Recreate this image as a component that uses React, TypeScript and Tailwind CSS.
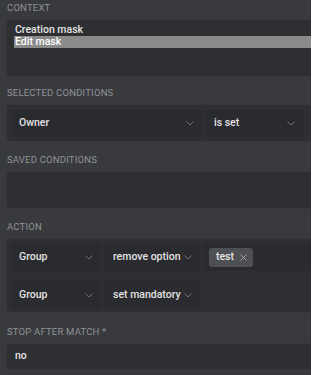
import React from "react";

const Chevron = () => (
  <svg width="8" height="5" viewBox="0 0 8 5" fill="none" className="shrink-0">
    <path d="M0.5 0.5 L4 4 L7.5 0.5" stroke="#6f7176" strokeWidth="1" />
  </svg>
);

const Select = ({ label, w }: { label: string; w: string }) => (
  <div className={`${w} h-[28px] shrink-0 rounded-[3px] bg-[#2a2b2f] flex items-center justify-between pl-[8px] pr-[8px]`}>
    <span className="text-[10.5px] font-medium text-[#e2e2e2] leading-none">{label}</span>
    <Chevron />
  </div>
);

const Label = ({ children, className = "" }: { children: React.ReactNode; className?: string }) => (
  <div className={`h-[14px] leading-[14px] pt-[1px] text-[9.5px] font-normal uppercase tracking-[0.2px] text-[#909297] pl-[1px] mb-[5px] ${className}`}>
    {children}
  </div>
);

const Box = ({ children, className = "" }: { children?: React.ReactNode; className?: string }) => (
  <div className={`w-full rounded-[3px] border border-[#36373b] bg-[#2e2f33] ${className}`}>{children}</div>
);

export default function App() {
  return (
    <div
      className="w-[311px] h-[375px] overflow-hidden bg-[#393a3e]"
      style={{ fontFamily: "Roboto, 'Open Sans', sans-serif" }}
    >
      <div className="w-[340px] pl-[6px]">
        <Label>Context</Label>
        <Box className="h-[58px] pt-[4px] pl-[7px]">
          <div className="h-[12px] leading-[12px] text-[10.5px] font-medium text-[#e4e4e4] pl-[1px]">Creation mask</div>
          <div className="h-[12px] leading-[12px] text-[10.5px] font-medium text-white bg-[#8a8a8a] pl-[1px]">Edit mask</div>
        </Box>

        <Label className="mt-[8px]">Selected conditions</Label>
        <Box className="p-[4px] flex gap-[4px]">
          <Select label="Owner" w="w-[191px]" />
          <Select label="is set" w="w-[97px]" />
        </Box>

        <Label className="mt-[10px]">Saved conditions</Label>
        <Box className="h-[38px]" />

        <Label className="mt-[10px]">Action</Label>
        <Box className="pt-[4px] pb-[3px] px-[4px] flex flex-col gap-[10px]">
          <div className="flex gap-[4px]">
            <Select label="Group" w="w-[90px]" />
            <Select label="remove option" w="w-[95px]" />
            <div className="flex-1 h-[28px] rounded-[3px] bg-[#2a2b2f] flex items-center pl-[5px]">
              <div className="h-[19px] rounded-[3px] bg-[#4e5055] flex items-center pl-[7px] pr-[6px] gap-[6px]">
                <span className="text-[10.5px] font-medium text-[#e6e6e6] leading-none">test</span>
                <svg width="7" height="7" viewBox="0 0 7 7" fill="none">
                  <path d="M0.5 0.5 L6.5 6.5 M6.5 0.5 L0.5 6.5" stroke="#a3a5a9" strokeWidth="1" />
                </svg>
              </div>
            </div>
          </div>
          <div className="flex gap-[4px]">
            <Select label="Group" w="w-[90px]" />
            <Select label="set mandatory" w="w-[95px]" />
          </div>
        </Box>

        <Label className="mt-[11px]">Stop after match *</Label>
        <Box className="h-[27px] flex items-center pl-[8px]">
          <span className="text-[10.5px] font-medium text-[#e2e2e2] leading-none">no</span>
        </Box>
      </div>
    </div>
  );
}
